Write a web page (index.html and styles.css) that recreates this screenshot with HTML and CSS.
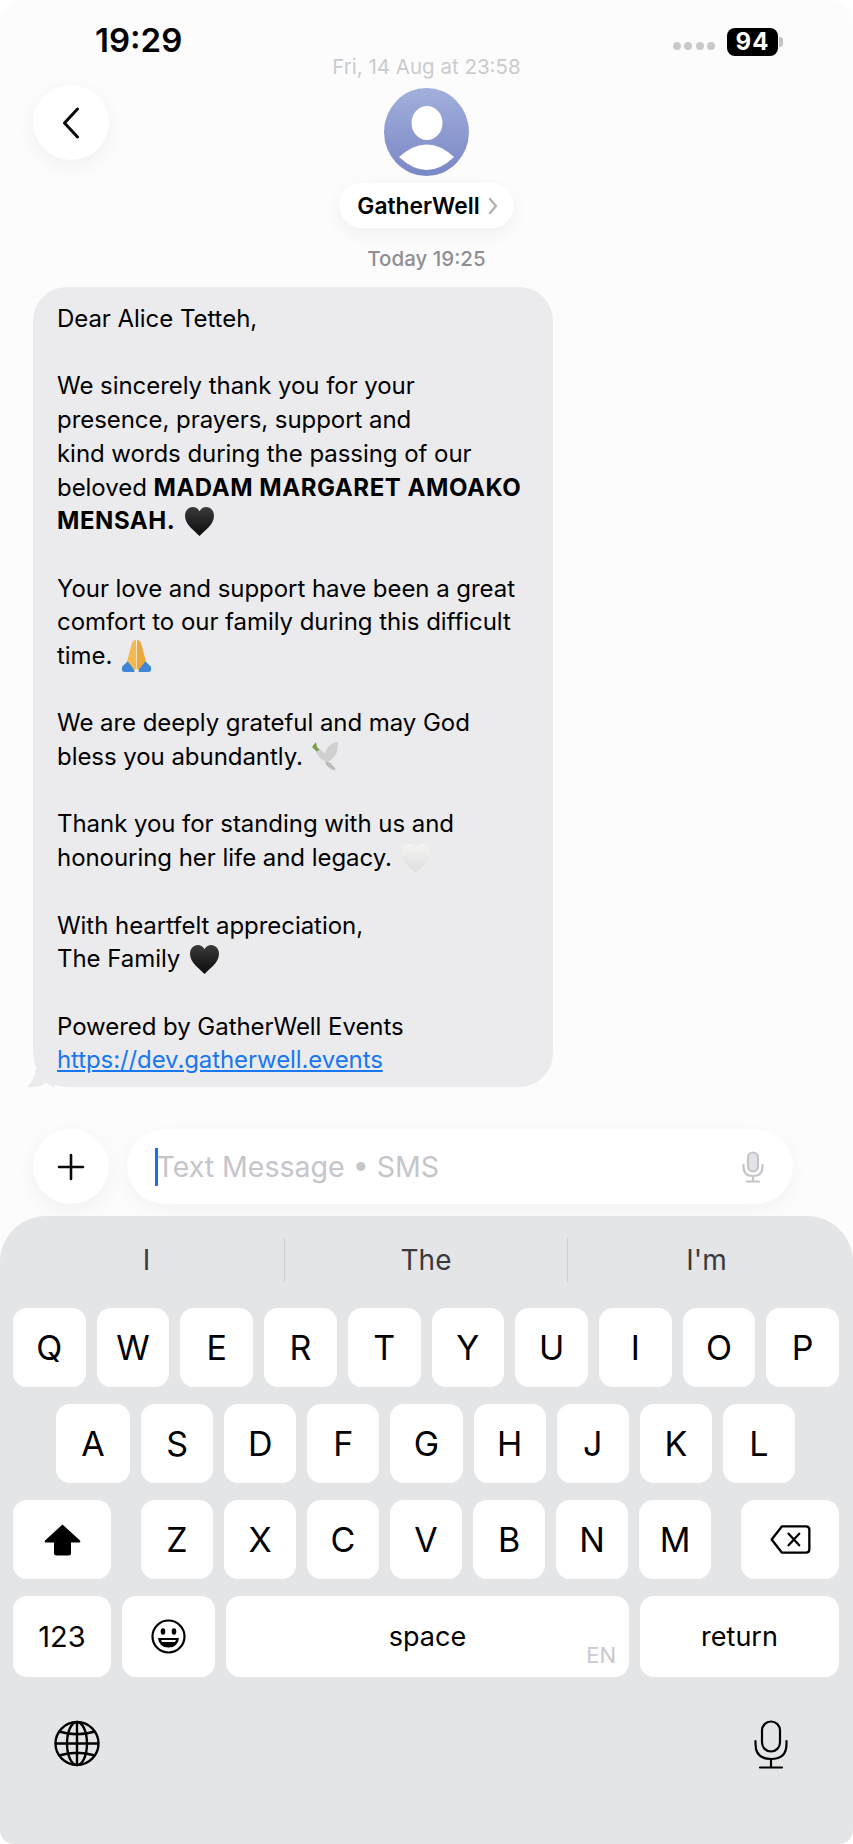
FILE: index.html
```html
<!DOCTYPE html>
<html lang="en">
<head>
  <meta charset="UTF-8">
  <meta name="viewport" content="width=device-width, initial-scale=1.0">
  <title>Messages - GatherWell</title>
  <link rel="stylesheet" href="styles.css">
</head>
<body>
  <svg class="defs" width="0" height="0" aria-hidden="true">
    <defs>
      <linearGradient id="darkHeart" x1="0" y1="0" x2="0" y2="1">
        <stop offset="0" stop-color="#3a3a3a"/>
        <stop offset="1" stop-color="#0c0c0c"/>
      </linearGradient>
      <linearGradient id="paleHeart" x1="0" y1="0" x2="0" y2="1">
        <stop offset="0" stop-color="#f4f4f3"/>
        <stop offset="1" stop-color="#dcdcda"/>
      </linearGradient>
      <linearGradient id="avatarFill" x1="0" y1="0" x2="0" y2="1">
        <stop offset="0" stop-color="#a3afdb"/>
        <stop offset="1" stop-color="#7a87c6"/>
      </linearGradient>
      <symbol id="heart" viewBox="0 0 28 28">
        <path d="M14 28C9 23 0 17 0 8.500C0 3.500 3.500 0 7.500 0C10.500 0 12.800 1.700 14 4.200C15.200 1.700 17.500 0 20.500 0C24.500 0 28 3.500 28 8.500C28 17 19 23 14 28Z"/>
      </symbol>
    </defs>
  </svg>

  <div class="screen">
    <header class="status">
      <span class="clock">19:29</span>
      <div class="status-right">
        <span class="dots"><i></i><i></i><i></i><i></i></span>
        <span class="battery">94</span>
      </div>
    </header>

    <div class="date-old">Fri, 14 Aug at 23:58</div>

    <div class="contact-row">
      <button class="round-btn back" type="button" aria-label="Back">
        <svg width="18" height="32" viewBox="0 0 18 32"><path d="M15.500 2L2.500 16L15.500 30" fill="none" stroke="#0a0a0a" stroke-width="3" stroke-linecap="round" stroke-linejoin="round"/></svg>
      </button>
      <div class="contact">
        <svg class="avatar" width="85" height="88" viewBox="0 0 85 88">
          <ellipse cx="42.500" cy="44" rx="42.500" ry="44" fill="url(#avatarFill)"/>
          <ellipse cx="43" cy="35" rx="15.500" ry="17" fill="#fff"/>
          <path d="M15 69Q43 44 70 69Q43 95 15 69Z" fill="#fff"/>
        </svg>
        <div class="name-pill">GatherWell
          <svg width="10" height="18" viewBox="0 0 10 18"><path d="M2 2L8 9L2 16" fill="none" stroke="#b4b4b8" stroke-width="2.500" stroke-linecap="round" stroke-linejoin="round"/></svg>
        </div>
      </div>
    </div>

    <div class="date-today">Today 19:25</div>

    <div class="bubble">
      <p>Dear Alice Tetteh,</p>
      <p>We sincerely thank you for your<br>presence, prayers, support and<br>kind words during the passing of our<br>beloved <b>MADAM MARGARET AMOAKO MENSAH.</b> <svg class="emoji heart-dark"><use href="#heart"/></svg></p>
      <p>Your love and support have been a great comfort to our family during this difficult time. <svg class="emoji pray" viewBox="0 0 30 32">
        <path d="M1 27L8 20L12 24L13 32H3Q0 32 1 27Z" fill="#3f86d6"/>
        <path d="M29 27L22 20L18 24L17 32H27Q30 32 29 27Z" fill="#3f86d6"/>
        <path d="M14.500 1Q11 1 10 6L6 21L13 30L14.700 29Z" fill="#f6b94e"/>
        <path d="M15.500 1Q19 1 20 6L24 21L17 30L15.300 29Z" fill="#eda83c"/>
      </svg></p>
      <p>We are deeply grateful and may God<br>bless you abundantly. <svg class="emoji dove" viewBox="0 0 28 30">
        <path d="M1 6L5 1L6 6L9 9L6 11Z" fill="#7c9a52"/>
        <path d="M5 11Q9 7 12 11L14 12Q17 2 27 1Q28 12 21 18L19 20Q12 21 8 16Z" fill="#d0d0d0"/>
        <path d="M15 20Q20 21 24 27Q25 30 22 29Q17 27 14 22Z" fill="#bcbcbc"/>
      </svg></p>
      <p>Thank you for standing with us and<br>honouring her life and legacy. <svg class="emoji heart-pale"><use href="#heart"/></svg></p>
      <p>With heartfelt appreciation,<br>The Family <svg class="emoji heart-dark"><use href="#heart"/></svg></p>
      <p>Powered by GatherWell Events<br><a href="#">https://dev.gatherwell.events</a></p>
      <svg class="tail" width="28" height="30" viewBox="0 0 28 30"><path d="M9 0C10 10 8 22 0 29C8 30 14 28 19 25L28 30V0Z" fill="#ebebed"/></svg>
    </div>

    <div class="input-row">
      <button class="round-btn plus" type="button" aria-label="Add">
        <svg width="28" height="28" viewBox="0 0 28 28"><path d="M14 2V26M2 14H26" stroke="#0a0a0a" stroke-width="2.600" stroke-linecap="round"/></svg>
      </button>
      <div class="input">
        <span class="caret"></span>
        <span class="placeholder">Text Message • SMS</span>
        <svg class="input-mic" width="22" height="32" viewBox="0 0 22 32" fill="none" stroke="#c4c4c9" stroke-width="2.200" stroke-linecap="round">
          <rect x="6" y="1.500" width="10" height="19" rx="5" fill="#e4e4e8"/>
          <path d="M1.500 14V16Q1.500 25 11 25Q20.500 25 20.500 16V14M11 25V30M5 30.500H17"/>
        </svg>
      </div>
    </div>

    <div class="keyboard">
      <div class="suggestions">
        <span>I</span><span>The</span><span>I'm</span>
      </div>
      <div class="key-row">
        <span class="key">Q</span><span class="key">W</span><span class="key">E</span><span class="key">R</span><span class="key">T</span><span class="key">Y</span><span class="key">U</span><span class="key">I</span><span class="key">O</span><span class="key">P</span>
      </div>
      <div class="key-row row-home">
        <span class="key">A</span><span class="key">S</span><span class="key">D</span><span class="key">F</span><span class="key">G</span><span class="key">H</span><span class="key">J</span><span class="key">K</span><span class="key">L</span>
      </div>
      <div class="key-row row-shift">
        <span class="key wide">
          <svg width="37" height="32" viewBox="0 0 37 32"><path d="M18.500 0.500L36 16.500Q37 18.500 35 18.500H27V29Q27 31.500 24.500 31.500H12.500Q10 31.500 10 29V18.500H2Q0 18.500 1 16.500Z" fill="#000"/></svg>
        </span>
        <div class="letters">
          <span class="key">Z</span><span class="key">X</span><span class="key">C</span><span class="key">V</span><span class="key">B</span><span class="key">N</span><span class="key">M</span>
        </div>
        <span class="key wide">
          <svg width="41" height="29" viewBox="0 0 42 30" fill="none" stroke="#000" stroke-width="2.400" stroke-linecap="round" stroke-linejoin="round">
            <path d="M12 1.500H37Q40.500 1.500 40.500 5V25Q40.500 28.500 37 28.500H12L1.500 15Z"/>
            <path d="M19 9L30 21M30 9L19 21"/>
          </svg>
        </span>
      </div>
      <div class="key-row row-bottom">
        <span class="key small digits">123</span>
        <span class="key">
          <svg width="35" height="35" viewBox="0 0 35 35">
            <circle cx="17.500" cy="17.500" r="16" fill="none" stroke="#000" stroke-width="2.200"/>
            <ellipse cx="12" cy="12.500" rx="2.300" ry="3.200"/>
            <ellipse cx="23" cy="12.500" rx="2.300" ry="3.200"/>
            <path d="M7 19H28Q27 28.500 17.500 28.500Q8 28.500 7 19Z"/>
            <path d="M10 21H25L24 23H11Z" fill="#fff"/>
          </svg>
        </span>
        <span class="key small space">space<em>EN</em></span>
        <span class="key small">return</span>
      </div>
      <div class="kb-tools">
        <svg width="46" height="47" viewBox="0 0 46 47" fill="none" stroke="#000" stroke-width="2.400">
          <circle cx="23" cy="23.500" r="21.500"/>
          <ellipse cx="23" cy="23.500" rx="10" ry="21.500"/>
          <path d="M23 2V45M1.500 23.500H44.500M5 11.500Q23 17 41 11.500M5 35.500Q23 30 41 35.500"/>
        </svg>
        <svg width="34" height="49" viewBox="0 0 34 49" fill="none" stroke="#000" stroke-width="2.200" stroke-linecap="round">
          <rect x="8" y="1.500" width="18" height="30" rx="9"/>
          <path d="M1.500 21V24Q1.500 39 17 39Q32.500 39 32.500 24V21M17 39V47.500M6 47.500H28"/>
        </svg>
      </div>
    </div>
  </div>
</body>
</html>
```

FILE: styles.css
```css
* { box-sizing: border-box; }
html, body { margin: 0; background: #fff; }
body {
  font-family: Inter, "Liberation Sans", sans-serif;
  color: #000;
}
.defs { display: block; height: 0; }

.screen {
  width: 853px;
  height: 1844px;
  display: flex;
  flex-direction: column;
  background: #fcfcfc;
  border-radius: 24px 24px 14px 14px;
  overflow: hidden;
}

/* status bar */
.status {
  height: 55px;
  padding: 21px 75px 0 95px;
  display: flex;
  justify-content: space-between;
  align-items: flex-start;
}
.clock { font-size: 33px; font-weight: 600; line-height: 38px; }
.status-right { display: flex; gap: 12px; margin-top: 7px; }
.dots { display: flex; gap: 3.500px; margin-top: 14px; }
.dots i { width: 8px; height: 8px; border-radius: 50%; background: #c9c9c9; }
.battery {
  position: relative;
  width: 51px;
  height: 28px;
  border-radius: 8px;
  background: #000;
  color: #fff;
  font-size: 24px;
  font-weight: 700;
  line-height: 28px;
  text-align: center;
  letter-spacing: 1px;
}
.battery::after {
  content: "";
  position: absolute;
  left: 52px;
  top: 9px;
  width: 4px;
  height: 10px;
  border-radius: 0 3px 3px 0;
  background: #c4c4c4;
}

.date-old, .date-today { text-align: center; font-size: 20.500px; line-height: 24px; }
.date-old { color: #cbcbce; }
.date-today { color: #8e8e93; font-weight: 500; margin-top: 19px; }

/* contact header */
.contact-row { position: relative; display: flex; justify-content: center; }
.contact-row .back { position: absolute; left: 33px; top: 6px; }
.contact { display: flex; flex-direction: column; align-items: center; padding-top: 9px; }
.avatar { display: block; flex: none; }
.name-pill {
  margin-top: 7px;
  height: 45px;
  padding: 0 16px 0 18px;
  display: flex;
  align-items: center;
  gap: 8px;
  background: #fff;
  border-radius: 23px;
  font-size: 22.800px;
  font-weight: 600;
  box-shadow: 0 6px 18px rgba(0,0,0,0.05);
}

.round-btn {
  width: 76px;
  height: 75px;
  padding: 0;
  border: 0;
  border-radius: 50%;
  background: #fff;
  display: flex;
  align-items: center;
  justify-content: center;
  box-shadow: 0 6px 20px rgba(0,0,0,0.05);
  flex: none;
}

/* message */
.bubble {
  position: relative;
  margin: 16px 0 0 33px;
  width: 520px;
  height: 800px;
  padding: 15px 20px 0 24px;
  background: #ebebed;
  border-radius: 34px;
  font-size: 24px;
  line-height: 33.700px;
  letter-spacing: -0.050px;
  flex: none;
}
.bubble p { margin: 0 0 33.700px; }
.bubble p:last-of-type { margin-bottom: 0; }
.bubble b { font-weight: 700; letter-spacing: 0.550px; }
.bubble a { color: #1877f2; letter-spacing: -0.100px; }
.tail { position: absolute; left: -6px; bottom: -1px; }
/* margins keep the icon from stretching the line box */
.emoji { display: inline-block; width: 29px; height: 29px; margin: -8px 0 -8px 3px; vertical-align: 1px; }
.heart-dark { fill: url(#darkHeart); }
.heart-pale { fill: url(#paleHeart); margin-left: 2px; }
.pray { width: 31px; height: 33px; vertical-align: 0; margin-left: 2px; }
.dove { width: 28px; height: 30px; vertical-align: 2px; margin-left: 1px; }

/* input */
.input-row { display: flex; gap: 18px; padding: 42px 60px 0 33px; }
.input {
  flex: 1;
  height: 75px;
  display: flex;
  align-items: center;
  padding: 0 29px 0 28px;
  background: #fff;
  border-radius: 38px;
  box-shadow: 0 6px 20px rgba(0,0,0,0.04);
}
.caret { width: 2.500px; height: 38px; background: #1a6ff0; margin-right: -1px; }
.placeholder { flex: 1; font-size: 28.500px; color: #c5c5ca; }

/* keyboard */
.keyboard {
  margin-top: auto;
  height: 628px;
  padding: 22px 14px 0 13px;
  background: #e4e5e7;
  border-radius: 46px 46px 0 0;
}
.suggestions {
  display: grid;
  grid-template-columns: 271px 283px 1fr;
  height: 44px;
  margin: 0 -14px 26px -13px;
  padding-left: 13px;
  font-size: 28px;
  color: #3a3a3e;
}
.suggestions span { display: flex; align-items: center; justify-content: center; border-left: 1px solid #cfd0d3; }
.suggestions span:first-child { border-left: 0; padding-right: 4px; }
.suggestions span:last-child { padding-right: 8px; }

.key-row { display: flex; gap: 11px; height: 79px; margin-bottom: 17px; }
.key {
  flex: 1;
  display: flex;
  align-items: center;
  justify-content: center;
  background: #fff;
  border-radius: 14px;
  font-size: 34px;
}
.row-home { padding: 0 44px 0 43px; }
.row-home .key:first-child { flex: 0 0 74px; }
.row-shift { justify-content: space-between; }
.key.wide { flex: none; width: 98px; }
.letters { display: flex; gap: 11px; width: 570px; }
.row-bottom { height: 81px; margin-bottom: 0; }
.row-bottom .key { flex: none; }
.row-bottom .key:nth-child(1) { width: 98px; }
.row-bottom .key:nth-child(2) { width: 93px; }
.row-bottom .key:nth-child(3) { width: 403px; }
.row-bottom .key:nth-child(4) { width: 199px; }
.key.small { font-size: 27px; }
.key.digits { font-size: 29px; }
.space { position: relative; }
.space em {
  position: absolute;
  right: 13px;
  bottom: 9px;
  font-style: normal;
  font-size: 22px;
  color: #c8c9d0;
}
.kb-tools {
  display: flex;
  justify-content: space-between;
  padding: 43px 51px 0 41px;
}
```
